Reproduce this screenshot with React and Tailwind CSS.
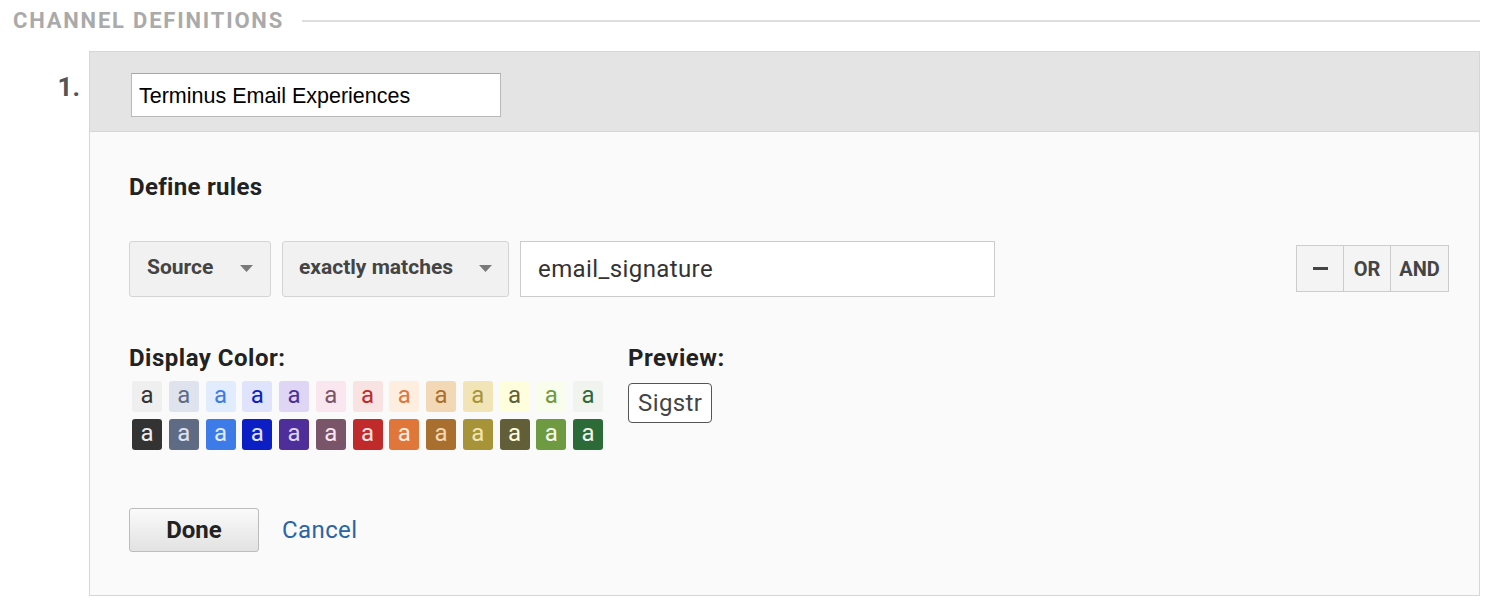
import React from 'react';

// Display colour swatches: light row, then dark row (bg / text)
const lightSwatches = [
  ['#efefef', '#333333'],
  ['#dfe3ee', '#5f6b85'],
  ['#e1ecff', '#3d7be8'],
  ['#e0e3fc', '#0c1fc4'],
  ['#dfd5f5', '#4d2e9b'],
  ['#f9e6ef', '#7a5468'],
  ['#f9e2e2', '#c02a2a'],
  ['#fdeee0', '#e0763a'],
  ['#f3d8b5', '#a96f2f'],
  ['#f1e5b7', '#a89438'],
  ['#fefedd', '#625f38'],
  ['#f8fdec', '#6e9a42'],
  ['#f1f4ee', '#2c6a38'],
];

const darkSwatches = lightSwatches.map(([bg, fg]) => [fg, bg]);

const Caret = () => (
  <svg width="13" height="7" viewBox="0 0 13 7" className="shrink-0">
    <path d="M0 0 L13 0 L6.5 7 Z" fill="#7a7a7a" />
  </svg>
);

const Swatch = ({ bg, fg }) => (
  <div
    className="w-[30px] h-[31px] rounded-[3px] flex items-center justify-center text-[24px] leading-none pb-[3px]"
    style={{ backgroundColor: bg, color: fg }}
  >
    a
  </div>
);

const App = () => {
  return (
    <div
      className="w-[1495px] h-[607px] bg-white overflow-hidden"
      style={{ fontFamily: 'Roboto, "Liberation Sans", sans-serif' }}
    >
      {/* Section header */}
      <div className="flex items-center pl-[13px] pr-[15px] pt-[6px]">
        <h2 className="text-[22px] leading-[30px] font-bold tracking-[1.8px] text-[#aaaaaa] uppercase whitespace-nowrap">
          Channel Definitions
        </h2>
        <div className="flex-1 ml-[18px] h-[2px] bg-[#dddddd]" />
      </div>

      {/* Channel 1 */}
      <div className="flex mt-[15px]">
        <div className="w-[89px] shrink-0 pr-[9px] pt-[21px] text-right text-[26px] leading-[30px] font-bold text-[#555555]">
          1.
        </div>
        <div className="w-[1391px] border border-[#d6d6d6]">
          {/* Name */}
          <div className="h-[80px] bg-[#e4e4e4] border-b border-[#d6d6d6] pl-[41px] pt-[21px]">
            <input
              type="text"
              defaultValue="Terminus Email Experiences"
              className="w-[370px] h-[44px] bg-white border border-[#b9b9b9] border-t-[#a8a8a8] pl-[7px] pt-[3px] text-[21.5px] text-black outline-none"
              style={{ fontFamily: '"Liberation Sans", Arial, sans-serif' }}
            />
          </div>

          {/* Body */}
          <div className="bg-[#fafafa] pl-[39px] pr-[30px] pt-[41px] pb-[43px]">
            <h3 className="text-[24px] leading-[28px] font-bold tracking-[0.3px] text-[#222222]">Define rules</h3>

            {/* Rule row */}
            <div className="flex items-start mt-[40px]">
              <button className="w-[142px] h-[56px] flex items-center justify-between pl-[17px] pr-[17px] pb-[2px] bg-[#f1f1f1] border border-[#d4d4d4] rounded-[3px] text-[21px] font-bold text-[#444444]">
                <span>Source</span>
                <Caret />
              </button>
              <button className="ml-[11px] w-[227px] h-[56px] flex items-center justify-between pl-[16px] pr-[16px] pb-[2px] bg-[#f1f1f1] border border-[#d4d4d4] rounded-[3px] text-[21px] font-bold text-[#444444]">
                <span>exactly matches</span>
                <Caret />
              </button>
              <input
                type="text"
                defaultValue="email_signature"
                className="ml-[11px] w-[475px] h-[56px] bg-white border border-[#cccccc] pl-[17px] text-[24px] tracking-[0.4px] text-[#333333] outline-none"
              />
              <div className="ml-auto mt-[4px] flex h-[47px] border border-[#cccccc] bg-[#f4f4f4] text-[20px] font-bold text-[#444444]">
                <button className="w-[46px] flex items-center justify-center">
                  <span className="block w-[15px] h-[3px] bg-[#444444]" />
                </button>
                <button className="w-[47px] border-l border-[#cccccc] flex items-center justify-center">OR</button>
                <button className="w-[58px] border-l border-[#cccccc] flex items-center justify-center">AND</button>
              </div>
            </div>

            {/* Colour + preview */}
            <div className="flex mt-[47px]">
              <div className="w-[498px]">
                <div className="text-[24px] leading-[28px] font-bold tracking-[0.5px] text-[#222222]">Display Color:</div>
                <div className="mt-[9px] ml-[3px] grid grid-cols-[repeat(13,30px)] gap-x-[6.75px] gap-y-[7px]">
                  {lightSwatches.map(([bg, fg], i) => (
                    <Swatch key={`l${i}`} bg={bg} fg={fg} />
                  ))}
                  {darkSwatches.map(([bg, fg], i) => (
                    <Swatch key={`d${i}`} bg={bg} fg={fg} />
                  ))}
                </div>
              </div>
              <div className="pl-[1px]">
                <div className="text-[24px] leading-[28px] font-bold tracking-[0.5px] text-[#222222]">Preview:</div>
                <div className="mt-[11px] inline-flex items-center h-[40px] px-[9px] pb-[1px] border-[1.5px] border-[#555555] rounded-[4px] bg-white text-[24px] tracking-[0.4px] text-[#444444]">
                  Sigstr
                </div>
              </div>
            </div>

            {/* Actions */}
            <div className="flex items-center mt-[58px]">
              <button className="w-[130px] h-[44px] rounded-[3px] border border-[#bcbcbc] bg-gradient-to-b from-[#fafafa] to-[#e2e2e2] text-[24px] font-bold text-[#222222]">
                Done
              </button>
              <a className="ml-[23px] text-[24px] tracking-[0.4px] text-[#2a64a5] cursor-pointer">Cancel</a>
            </div>
          </div>
        </div>
      </div>
    </div>
  );
};

export default App;
